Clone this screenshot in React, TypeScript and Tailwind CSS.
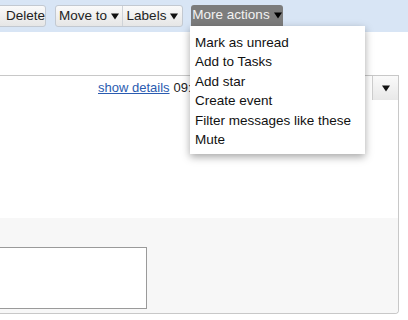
import React from "react";

function Tri({ className = "" }: { className?: string }) {
  return (
    <svg width="8" height="7" viewBox="0 0 8 7" className={className}>
      <path d="M0 0.5 L8 0.5 L4 6.5 Z" fill="currentColor" />
    </svg>
  );
}

export default function App() {
  const items = [
    "Mark as unread",
    "Add to Tasks",
    "Add star",
    "Create event",
    "Filter messages like these",
    "Mute",
  ];
  return (
    <div
      className="relative w-[408px] h-[320px] overflow-hidden bg-white text-[13px] text-black"
      style={{ fontFamily: '"Liberation Sans", Arial, sans-serif' }}
    >
      {/* toolbar */}
      <div className="h-[32px] bg-[#d8e5f5] flex items-start pt-[5px]">
        <div className="-ml-[3px] h-[22px] w-[49px] flex items-center pl-[8px] rounded-[3px] border border-[#c3c9d1] bg-gradient-to-b from-[#fafafa] to-[#e6e6e6] text-[13.5px] text-[#222]">
          Delete
        </div>
        <div className="ml-[9px] h-[22px] flex rounded-[3px] border border-[#c3c9d1] bg-gradient-to-b from-[#fafafa] to-[#e6e6e6] text-[13.5px] text-[#222]">
          <div className="w-[67px] flex items-center justify-center gap-[4px] border-r border-[#cfd3d8]">
            Move to <Tri className="text-[#111]" />
          </div>
          <div className="w-[59px] flex items-center justify-center gap-[4px]">
            Labels <Tri className="text-[#111]" />
          </div>
        </div>
        <div className="ml-[8px] h-[21px] w-[92px] flex items-center justify-center gap-[4px] rounded-t-[3px] bg-[#7c7c7c] text-[#f2f2f2] text-[13.5px]">
          More actions <Tri className="text-black" />
        </div>
      </div>

      {/* content */}
      <div className="h-[43px]" />
      <div className="w-[399px] h-[239px] border-t border-r border-b border-[#c8c8c8] rounded-br-[4px] flex flex-col">
        <div className="h-[24px] flex">
          <div className="flex-1 flex items-center pl-[98px] whitespace-nowrap text-[13px]">
            <span className="text-[#2a5bb0] underline">show details</span>
            <span className="ml-[4px] text-[#222]">09:</span>
          </div>
          <div className="w-[26px] h-[24px] flex items-center justify-center border-l border-[#cfcfcf] bg-gradient-to-b from-[#fafafa] to-[#e8e8e8] text-[#111]">
            <Tri />
          </div>
        </div>
        <div className="h-[118px] bg-white" />
        <div className="flex-1 bg-[#f7f7f7] rounded-br-[4px] pt-[29px]">
          <div className="w-[148px] h-[62px] -ml-[1px] bg-white border border-[#9a9a9a]" />
        </div>
      </div>

      {/* menu */}
      <div className="absolute left-[190px] top-[26px] w-[175px] h-[128px] bg-white shadow-[0_3px_8px_rgba(0,0,0,0.35)] pt-[7px] pl-[5px] text-[#111]">
        {items.map((t) => (
          <div key={t} className="h-[19.4px] flex items-center text-[13.5px] leading-none">
            {t}
          </div>
        ))}
      </div>
    </div>
  );
}
